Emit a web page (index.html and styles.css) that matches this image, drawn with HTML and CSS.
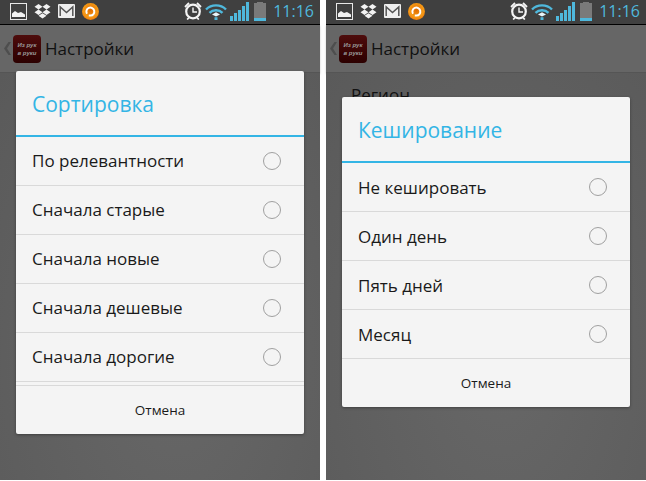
FILE: index.html
```html
<!DOCTYPE html>
<html lang="en">
<head>
    <meta charset="UTF-8">
    <meta name="viewport" content="width=device-width, initial-scale=1.0">
    <title>Настройки</title>
    <link rel="stylesheet" href="styles.css">
</head>
<body>
    <svg class="defs" width="0" height="0">
        <defs>
            <radialGradient id="g-orange" cx="50%" cy="40%" r="60%">
                <stop offset="0" stop-color="#e06a00"/>
                <stop offset="0.7" stop-color="#f59a16"/>
                <stop offset="1" stop-color="#f07c0a"/>
            </radialGradient>
        </defs>
        <symbol id="i-picture" viewBox="0 0 17 17">
            <rect x="0.5" y="0.5" width="16" height="16" fill="none" stroke="#e8e8e8"/>
            <path d="M2 14V10.5L5 8 8 10 11 9 15 11.5V14Z" fill="#f2f2f2"/>
        </symbol>
        <symbol id="i-dropbox" viewBox="0 0 17 17">
            <path d="M4.5 1 8.5 3.7 4.5 6.4 .5 3.7ZM12.5 1 16.5 3.7 12.5 6.4 8.5 3.7ZM4.5 6.6 8.5 9.3 4.5 12 .5 9.3ZM12.5 6.6 16.5 9.3 12.5 12 8.5 9.3ZM4.5 12.8 8.5 10.2 12.5 12.8 8.5 15.5Z" fill="#f2f2f2"/>
        </symbol>
        <symbol id="i-mail" viewBox="0 0 17 14">
            <rect width="17" height="14" rx="1" fill="#efefef"/>
            <path d="M2.2 12V3L8.5 8.5 14.8 3V12" fill="none" stroke="#555" stroke-width="1.5"/>
        </symbol>
        <symbol id="i-orange" viewBox="0 0 17 17">
            <circle cx="8.5" cy="8.5" r="8.5" fill="url(#g-orange)"/>
            <path d="M5 10.8A4 4 0 1 1 8.5 12.6H6.8" fill="none" stroke="#fff" stroke-width="2"/>
        </symbol>
        <symbol id="i-alarm" viewBox="0 0 18 18">
            <circle cx="9" cy="9.5" r="6.8" fill="none" stroke="#f5f5f5" stroke-width="2.2"/>
            <path d="M9 5.5V10H13" fill="none" stroke="#f5f5f5" stroke-width="1.4"/>
            <path d="M1 5 5 1M17 5 13 1M3.2 17.5 5 15.5M14.8 17.5 13 15.5" fill="none" stroke="#f5f5f5" stroke-width="1.8"/>
        </symbol>
        <symbol id="i-wifi" viewBox="0 0 22 17">
            <path d="M1 6.5C6.5 1 15.5 1 21 6.5" fill="none" stroke="#4fb8dc" stroke-width="2.4"/>
            <path d="M4.5 9.8C8 6.3 14 6.3 17.5 9.8" fill="none" stroke="#4fb8dc" stroke-width="2.4"/>
            <path d="M7 11.5 11 9.2 15 11.5 11 13.5Z" fill="#e8f6fb"/>
            <rect x="9.5" y="14.2" width="3" height="2.8" fill="#4fb8dc"/>
        </symbol>
        <symbol id="i-back" viewBox="0 0 7 13">
            <path d="M4.5 0H7L3 6.5 7 13H4.5L0 6.5Z" fill="#4e4e4e"/>
        </symbol>
    </svg>

    <div class="page">
        <section class="phone">
            <div class="statusbar">
                <div class="status-left">
                    <svg class="ic-17"><use href="#i-picture"/></svg>
                    <svg class="ic-17"><use href="#i-dropbox"/></svg>
                    <svg class="ic-mail"><use href="#i-mail"/></svg>
                    <svg class="ic-17"><use href="#i-orange"/></svg>
                </div>
                <div class="status-right">
                    <svg class="ic-alarm"><use href="#i-alarm"/></svg>
                    <svg class="ic-wifi"><use href="#i-wifi"/></svg>
                    <div class="signal"><i class="s1"></i><i class="s2"></i><i class="s3"></i><i class="s4"></i><i class="s5"></i></div>
                    <div class="battery"><span class="battery-cap"></span><span class="battery-body"></span><span class="battery-level"></span></div>
                    <span class="clock">11:16</span>
                </div>
            </div>
            <div class="appbar">
                <svg class="ic-back"><use href="#i-back"/></svg>
                <div class="logo">Из рук<br>в руки</div>
                <span class="appbar-title">Настройки</span>
            </div>
            <div class="content"></div>
            <div class="overlay">
                <div class="dialog">
                    <div class="dialog-title">Сортировка</div>
                    <div class="option"><span>По релевантности</span><span class="radio"></span></div>
                    <div class="option"><span>Сначала старые</span><span class="radio"></span></div>
                    <div class="option"><span>Сначала новые</span><span class="radio"></span></div>
                    <div class="option"><span>Сначала дешевые</span><span class="radio"></span></div>
                    <div class="option"><span>Сначала дорогие</span><span class="radio"></span></div>
                    <div class="list-end"></div>
                    <div class="cancel">Отмена</div>
                </div>
            </div>
        </section>

        <section class="phone">
            <div class="statusbar">
                <div class="status-left">
                    <svg class="ic-17"><use href="#i-picture"/></svg>
                    <svg class="ic-17"><use href="#i-dropbox"/></svg>
                    <svg class="ic-mail"><use href="#i-mail"/></svg>
                    <svg class="ic-17"><use href="#i-orange"/></svg>
                </div>
                <div class="status-right">
                    <svg class="ic-alarm"><use href="#i-alarm"/></svg>
                    <svg class="ic-wifi"><use href="#i-wifi"/></svg>
                    <div class="signal"><i class="s1"></i><i class="s2"></i><i class="s3"></i><i class="s4"></i><i class="s5"></i></div>
                    <div class="battery"><span class="battery-cap"></span><span class="battery-body"></span><span class="battery-level"></span></div>
                    <span class="clock">11:16</span>
                </div>
            </div>
            <div class="appbar">
                <svg class="ic-back"><use href="#i-back"/></svg>
                <div class="logo">Из рук<br>в руки</div>
                <span class="appbar-title">Настройки</span>
            </div>
            <div class="content">
                <div class="setting">Регион</div>
            </div>
            <div class="overlay">
                <div class="dialog">
                    <div class="dialog-title">Кеширование</div>
                    <div class="option"><span>Не кешировать</span><span class="radio"></span></div>
                    <div class="option"><span>Один день</span><span class="radio"></span></div>
                    <div class="option"><span>Пять дней</span><span class="radio"></span></div>
                    <div class="option"><span>Месяц</span><span class="radio"></span></div>
                    <div class="cancel">Отмена</div>
                </div>
            </div>
        </section>
    </div>
</body>
</html>
```

FILE: styles.css
```css
* {
    box-sizing: border-box;
}
body {
    margin: 0;
    background: #ffffff;
    font-family: "Open Sans", "Noto Sans", sans-serif;
}
.defs {
    position: absolute;
}
.page {
    display: flex;
    justify-content: space-between;
    width: 646px;
    height: 481px;
}
.phone {
    position: relative;
    display: flex;
    flex-direction: column;
    width: 320px;
    height: 480px;
    background: #606060;
}

/* status bar */
.statusbar {
    display: flex;
    justify-content: space-between;
    align-items: center;
    height: 25px;
    padding: 0 6px 2px 10px;
    background: #404040;
    border-bottom: 1px solid #000000;
}
.status-left,
.status-right {
    display: flex;
    align-items: center;
}
.status-left {
    gap: 7px;
}
.status-right {
    gap: 3px;
}
.ic-17 {
    width: 17px;
    height: 17px;
}
.ic-mail {
    width: 17px;
    height: 14px;
}
.ic-alarm {
    width: 18px;
    height: 18px;
}
.ic-wifi {
    width: 22px;
    height: 17px;
}
.signal {
    display: flex;
    align-items: flex-end;
    gap: 1px;
    height: 19px;
}
.signal i {
    width: 3px;
    background: #4fb8dc;
}
.s1 { height: 5px; }
.s2 { height: 8px; }
.s3 { height: 11px; }
.s4 { height: 15px; }
.s5 { height: 19px; }
.battery {
    display: flex;
    flex-direction: column;
    align-items: center;
    width: 12px;
    height: 19px;
    margin-left: 2px;
}
.battery-cap {
    width: 6px;
    height: 1px;
    background: #7a7a7a;
}
.battery-body {
    width: 12px;
    flex: 1;
    background: #7a7a7a;
}
.battery-level {
    width: 12px;
    height: 3px;
    background: #4fb8dc;
}
.clock {
    margin-left: 4px;
    font-size: 16px;
    line-height: 19px;
    color: #4fb8dc;
}

/* action bar under the dim */
.appbar {
    display: flex;
    align-items: center;
    height: 48px;
    padding-left: 4px;
    background: #666666;
    border-bottom: 1px solid #555555;
    box-shadow: 0 1px 2px rgba(0, 0, 0, 0.2);
}
.ic-back {
    width: 7px;
    height: 13px;
    margin-right: 2px;
}
.logo {
    width: 28px;
    height: 28px;
    padding-top: 6px;
    border-radius: 4px;
    background: linear-gradient(#4e0c0c, #2c0000);
    font-family: "Liberation Sans", sans-serif;
    font-size: 6px;
    line-height: 8px;
    font-style: italic;
    font-weight: bold;
    text-align: center;
    color: #999999;
}
.appbar-title {
    margin-left: 4px;
    font-size: 17px;
    color: #111111;
}
.content {
    flex: 1;
    padding: 10px 25px;
    background: radial-gradient(ellipse at 55% 70%, #676767, #5a5a5a);
}
.setting {
    font-size: 17px;
    color: #111111;
}

/* dialog */
.overlay {
    position: absolute;
    top: 25px;
    left: 0;
    right: 0;
    bottom: 1px;
    display: flex;
    justify-content: center;
    align-items: center;
}
.dialog {
    width: 288px;
    background: #f4f4f4;
    border-radius: 2px;
    box-shadow: 0 1px 3px rgba(0, 0, 0, 0.35);
}
.dialog-title {
    display: flex;
    align-items: center;
    height: 66px;
    padding: 2px 0 0 16px;
    border-bottom: 2px solid #33b5e5;
    font-size: 21px;
    color: #33b5e5;
}
.option {
    display: flex;
    justify-content: space-between;
    align-items: center;
    height: 49px;
    padding: 0 23px 0 16px;
    border-bottom: 1px solid #d9d9d9;
    font-size: 17px;
    color: #1a1a1a;
}
.radio {
    width: 18px;
    height: 18px;
    border: 1px solid #a0a0a0;
    border-radius: 50%;
}
.list-end {
    height: 4px;
    border-bottom: 1px solid #d9d9d9;
}
.cancel {
    height: 48px;
    font-size: 13.5px;
    line-height: 48px;
    text-align: center;
    color: #1a1a1a;
}
```
